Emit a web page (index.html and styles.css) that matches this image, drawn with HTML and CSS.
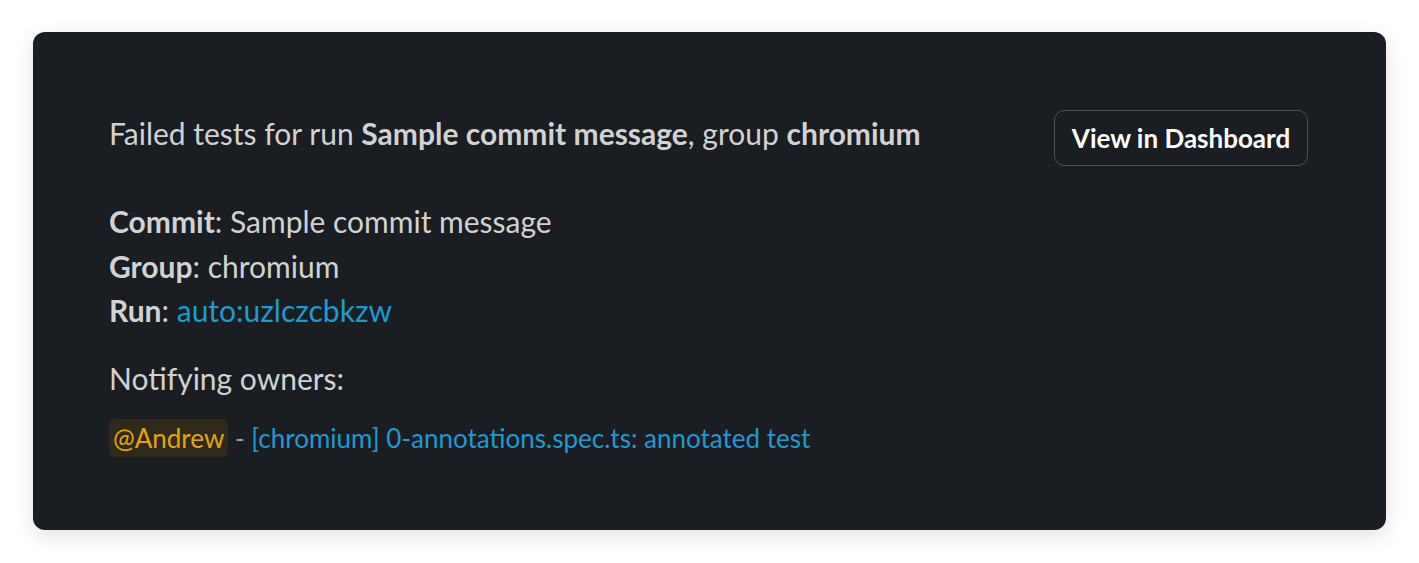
FILE: index.html
```html
<!DOCTYPE html>
<html>
<head>
<meta charset="utf-8">
<link rel="stylesheet" href="styles.css">
</head>
<body>
<div class="page">
  <div class="card">
    <div class="header">
      <div class="title">Failed tests for run <b>Sample commit message</b>, group <b>chromium</b></div>
      <button class="btn">View in Dashboard</button>
    </div>
    <div class="meta">
      <div><b>Commit</b>: Sample commit message</div>
      <div><b>Group</b>: chromium</div>
      <div><b>Run</b>: <a class="link">auto:uzlczcbkzw</a></div>
    </div>
    <div class="notify">Notifying owners:</div>
    <div class="owners"><span class="mention">@Andrew</span> <span class="dash">-</span> <a class="link">[chromium] 0-annotations.spec.ts: annotated test</a></div>
  </div>
</div>
</body>
</html>
```
FILE: styles.css
```css
html, body {
  margin: 0;
  padding: 0;
  background: #ffffff;
}
.page {
  padding: 32px 33px 33px 33px;
}
.card {
  box-sizing: border-box;
  background: #1a1d21;
  border-radius: 12px;
  box-shadow: 0 6px 20px rgba(0, 0, 0, 0.12);
  padding: 79px 78px 40px 76px;
  height: 498px;
  font-family: Lato, "Noto Sans", sans-serif;
  color: #d1d2d3;
  font-size: 30px;
}
.header {
  display: flex;
  justify-content: space-between;
  align-items: flex-start;
}
.title {
  line-height: 44px;
}
b {
  font-weight: 700;
}
.btn {
  font-family: Lato, "Noto Sans", sans-serif;
  font-weight: 700;
  font-size: 26px;
  color: #ffffff;
  background: transparent;
  border: 1px solid #505155;
  border-radius: 10px;
  height: 56px;
  width: 254px;
  padding: 0;
  margin-top: -1px;
}
.meta {
  margin-top: 33px;
  line-height: 44.5px;
}
.link {
  color: #1d9bd1;
}
.notify {
  margin-top: 23.5px;
  line-height: 44px;
}
.owners {
  margin-top: 19px;
  font-size: 26px;
  line-height: 38px;
}
.dash {
  color: #9a9b9e;
}
.mention {
  display: inline-block;
  background: #2f2a1a;
  color: #e2a50f;
  border-radius: 6px;
  padding: 0 4px;
}
```
